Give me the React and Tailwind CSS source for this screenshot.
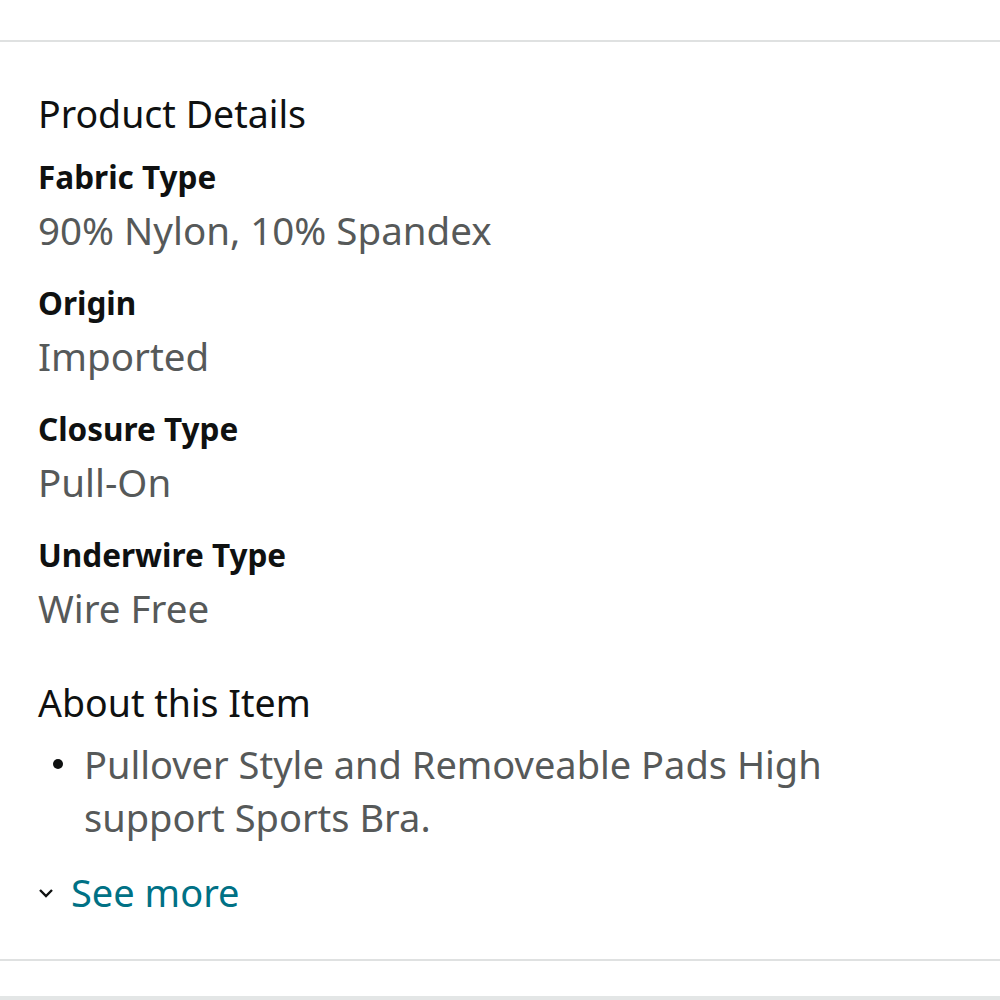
export default function App() {
  const items = [
    ["Fabric Type", "90% Nylon, 10% Spandex"],
    ["Origin", "Imported"],
    ["Closure Type", "Pull-On"],
    ["Underwire Type", "Wire Free"],
  ];
  return (
    <div className="w-[1000px] h-[1000px] bg-white overflow-hidden" style={{ fontFamily: '"Noto Sans", sans-serif' }}>
      <div className="h-[40px]" />
      <div className="h-[2px] bg-[#dfe1e1]" />
      <div className="px-[38px]">
        <div className="mt-[47px] text-[37.5px] leading-[50px] text-[#0f1111]">Product Details</div>
        <div className="mt-[15px] flex flex-col gap-[20px]">
          {items.map(([k, v]) => (
            <div key={k} className="flex flex-col">
              <div className="text-[31.5px] leading-[46px] font-bold text-[#0f1111]">{k}</div>
              <div className="text-[38.5px] leading-[60px] text-[#565959]">{v}</div>
            </div>
          ))}
        </div>
        <div className="mt-[40px] text-[37.5px] leading-[50px] text-[#0f1111]">About this Item</div>
        <div className="mt-[10px] flex">
          <div className="w-[46px] flex justify-center pt-[21px]">
            <div className="w-[10px] h-[10px] rounded-full bg-[#0f1111] ml-[-6px]" />
          </div>
          <div className="text-[38px] leading-[53px] text-[#565959] w-[790px]">
            Pullover Style and Removeable Pads High support Sports Bra.
          </div>
        </div>
        <div className="mt-[23px] flex items-center h-[50px]">
          <svg width="16" height="12" viewBox="0 0 16 12" className="mr-[17px] mt-[2px]">
            <path d="M2 3 L8 9 L14 3" fill="none" stroke="#0f1111" strokeWidth="2.4" />
          </svg>
          <span className="text-[38px] leading-[50px] text-[#007185]">See more</span>
        </div>
      </div>
      <div className="mt-[42px] h-[2px] bg-[#dfe1e1]" />
      <div className="h-[35px]" />
      <div className="h-[10px] bg-[#e3e6e6]" />
    </div>
  );
}
